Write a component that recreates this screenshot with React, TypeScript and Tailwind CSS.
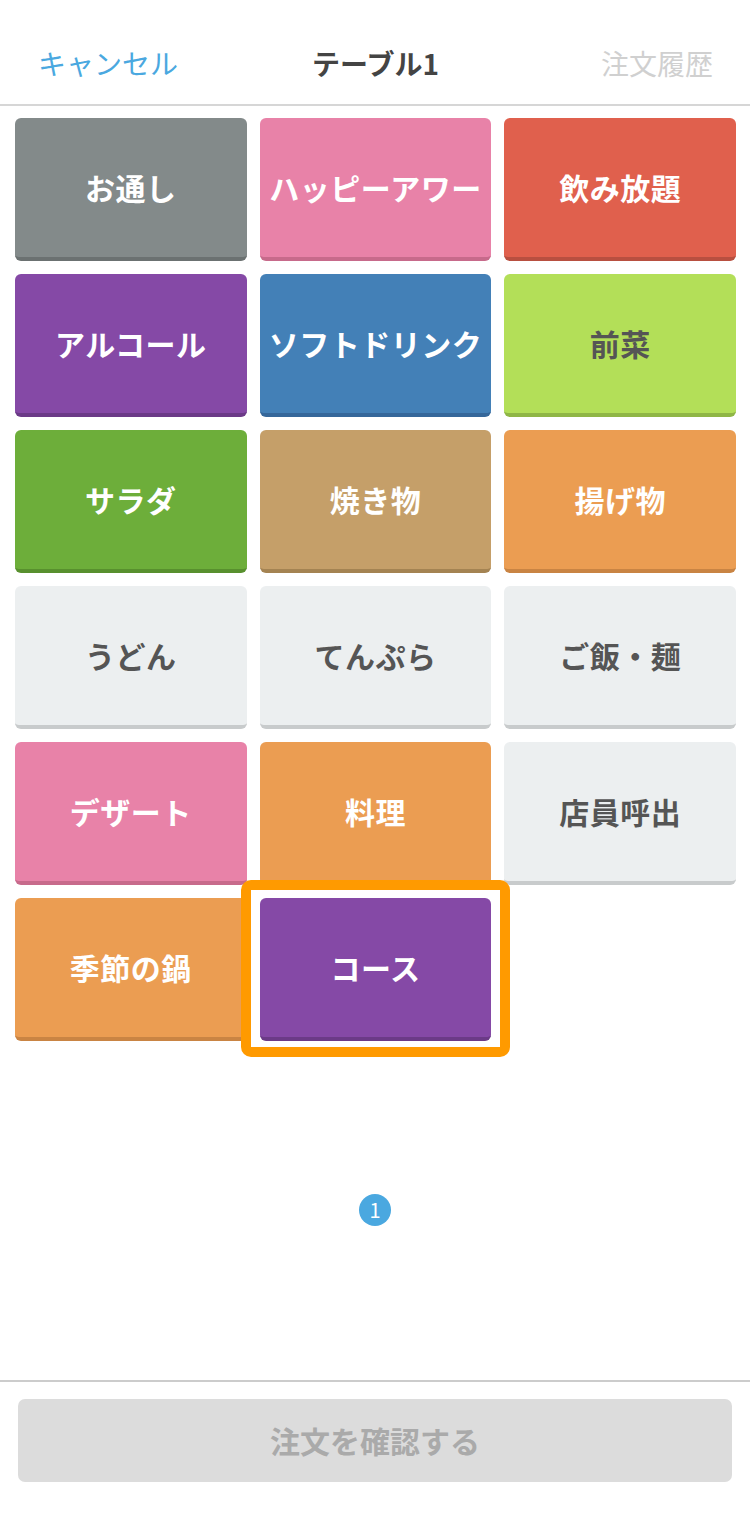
const font = "font-['Noto_Sans_CJK_JP','Noto_Sans',sans-serif]";

interface Category {
  label: string;
  bg: string;
  edge: string;
  dark?: boolean;
  selected?: boolean;
}

const categories: Category[] = [
  { label: 'お通し', bg: 'bg-[#838a8a]', edge: 'border-[#6b7171]' },
  { label: 'ハッピーアワー', bg: 'bg-[#e882a8]', edge: 'border-[#c76a8b]' },
  { label: '飲み放題', bg: 'bg-[#e0604d]', edge: 'border-[#b84f40]' },
  { label: 'アルコール', bg: 'bg-[#8549a6]', edge: 'border-[#6b3a87]' },
  { label: 'ソフトドリンク', bg: 'bg-[#4380b7]', edge: 'border-[#35679a]' },
  { label: '前菜', bg: 'bg-[#b3df58]', edge: 'border-[#8fb646]', dark: true },
  { label: 'サラダ', bg: 'bg-[#6dae3a]', edge: 'border-[#58902e]' },
  { label: '焼き物', bg: 'bg-[#c59f69]', edge: 'border-[#a48352]' },
  { label: '揚げ物', bg: 'bg-[#eb9d52]', edge: 'border-[#c98443]' },
  { label: 'うどん', bg: 'bg-[#eceff0]', edge: 'border-[#c8cbcc]', dark: true },
  { label: 'てんぷら', bg: 'bg-[#eceff0]', edge: 'border-[#c8cbcc]', dark: true },
  { label: 'ご飯・麺', bg: 'bg-[#eceff0]', edge: 'border-[#c8cbcc]', dark: true },
  { label: 'デザート', bg: 'bg-[#e882a8]', edge: 'border-[#c76a8b]' },
  { label: '料理', bg: 'bg-[#eb9d52]', edge: 'border-[#c98443]' },
  { label: '店員呼出', bg: 'bg-[#eceff0]', edge: 'border-[#c8cbcc]', dark: true },
  { label: '季節の鍋', bg: 'bg-[#eb9d52]', edge: 'border-[#c98443]' },
  { label: 'コース', bg: 'bg-[#8549a6]', edge: 'border-[#6b3a87]', selected: true },
];

function Tile({ item }: { item: Category }) {
  return (
    <div className="relative">
      <button
        className={`w-full h-[143px] rounded-[6px] border-b-[4px] ${item.bg} ${item.edge} flex items-center justify-center text-[30px] font-bold tracking-[0.5px] ${
          item.dark ? 'text-[#555555]' : 'text-white'
        }`}
      >
        {item.label}
      </button>
      {item.selected && (
        <div className="absolute -left-[19px] -right-[19px] -top-[18px] -bottom-[16px] rounded-[10px] border-[10px] border-[#ff9a00] pointer-events-none" />
      )}
    </div>
  );
}

export default function App() {
  return (
    <div className={`w-[750px] h-[1530px] bg-white flex flex-col ${font}`}>
      <header className="h-[106px] pt-[22px] px-[38px] flex items-center justify-between border-b-2 border-[#d6d6d6] shrink-0">
        <span className="text-[28px] text-[#4aa8e0] w-[180px]">キャンセル</span>
        <span className="text-[28px] font-bold text-[#444444]">テーブル1</span>
        <span className="text-[28px] text-[#d0d0d0] w-[180px] text-right -mr-[1px]">注文履歴</span>
      </header>

      <main className="flex-1 flex flex-col">
        <div className="grid grid-cols-3 gap-[13px] pl-[15px] pr-[14px] pt-[12px]">
          {categories.map((c) => (
            <Tile key={c.label} item={c} />
          ))}
        </div>
        <div className="flex justify-center mt-[153px]">
          <span className="w-[32px] h-[32px] rounded-full bg-[#4aa8e0] text-white text-[20px] flex items-center justify-center leading-none">
            1
          </span>
        </div>
      </main>

      <footer className="border-t-2 border-[#cccccc] pt-[17px] pb-[48px] px-[18px] shrink-0">
        <button className="w-full h-[83px] rounded-[7px] bg-[#dcdcdc] text-[30px] font-bold text-[#aaaaaa] flex items-center justify-center">
          注文を確認する
        </button>
      </footer>
    </div>
  );
}
